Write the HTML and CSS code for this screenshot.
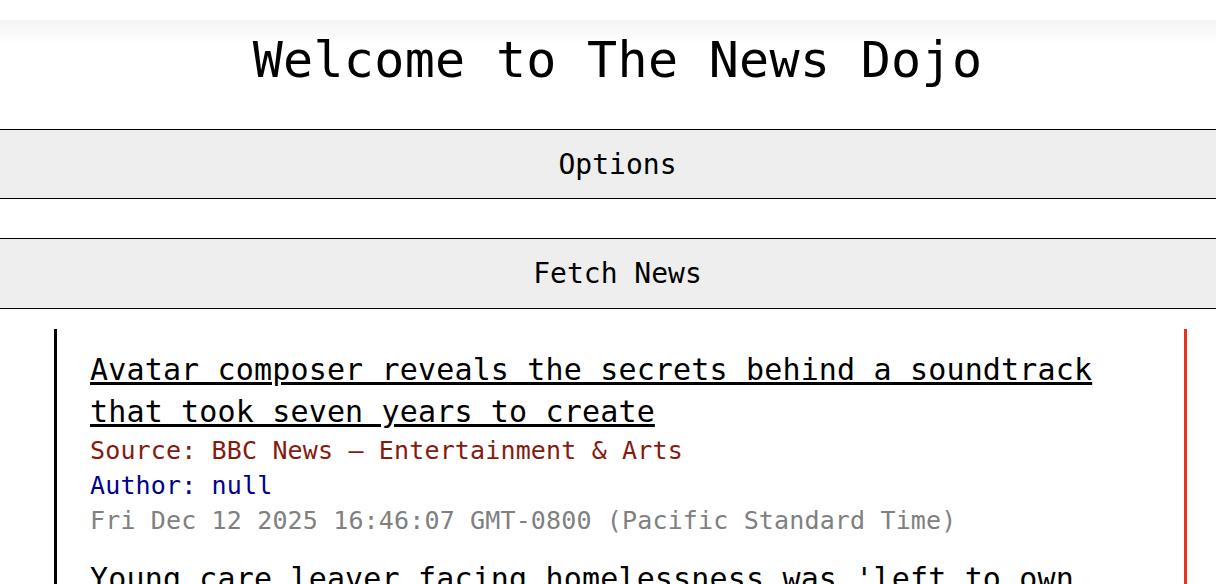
FILE: index.html
```html
<!DOCTYPE html>
<html lang="en">
<head>
    <meta charset="UTF-8">
    <meta name="viewport" content="width=device-width, initial-scale=1.0">
    <title>The News Dojo</title>
    <link rel="stylesheet" href="styles.css">
</head>
<body>
    <header class="header">
        <h1>Welcome to The News Dojo</h1>
    </header>

    <button class="bar-btn options-btn">Options</button>
    <div class="options-panel"></div>
    <button class="bar-btn fetch-btn">Fetch News</button>

    <div class="news-list">
        <div class="news-item">
            <a class="news-title" href="#">Avatar composer reveals the secrets behind a soundtrack that took seven years to create</a>
            <div class="news-source">Source: BBC News – Entertainment &amp; Arts</div>
            <div class="news-author">Author: null</div>
            <div class="news-date">Fri Dec 12 2025 16:46:07 GMT-0800 (Pacific Standard Time)</div>
        </div>
        <div class="news-item">
            <a class="news-title" href="#">Young care leaver facing homelessness was 'left to own devices'</a>
            <div class="news-source">Source: BBC News – England</div>
            <div class="news-author">Author: null</div>
            <div class="news-date">Fri Dec 12 2025 16:40:12 GMT-0800 (Pacific Standard Time)</div>
        </div>
    </div>
</body>
</html>
```

FILE: styles.css
```css
* {
    margin: 0;
    padding: 0;
    box-sizing: border-box;
}

body {
    font-family: 'DejaVu Sans Mono', Menlo, monospace;
    background: #fff;
    color: #000;
}

.header {
    margin-top: 20px;
    padding: 11px 0 40px 19px;
    background: linear-gradient(#f4f4f4 0, #fff 24px);
    text-align: center;
}

h1 {
    font-size: 50px;
    font-weight: normal;
    line-height: 58px;
    letter-spacing: 0.3px;
}

.bar-btn {
    display: block;
    width: 100%;
    height: 70px;
    padding: 0 0 0 19px;
    background: #eee;
    border: none;
    border-top: 1px solid #000;
    border-bottom: 1px solid #000;
    font-family: inherit;
    font-size: 28px;
    color: #000;
    cursor: pointer;
}

.options-panel {
    height: 39px;
}

.fetch-btn {
    height: 71px;
}

.news-list {
    margin: 20px 29px 0 54px;
    padding: 20px 33px;
    border-left: 3px solid #000;
    border-right: 3px solid #e8321f;
}

.news-item {
    margin-bottom: 20px;
}

.news-title {
    display: block;
    font-size: 30px;
    line-height: 42px;
    letter-spacing: 0.16px;
    color: #000;
}

.news-source,
.news-author,
.news-date {
    font-size: 25px;
    line-height: 35px;
    letter-spacing: 0.15px;
}

.news-source {
    color: #861a10;
}

.news-author {
    color: #00008b;
}

.news-date {
    color: #808080;
}
```
